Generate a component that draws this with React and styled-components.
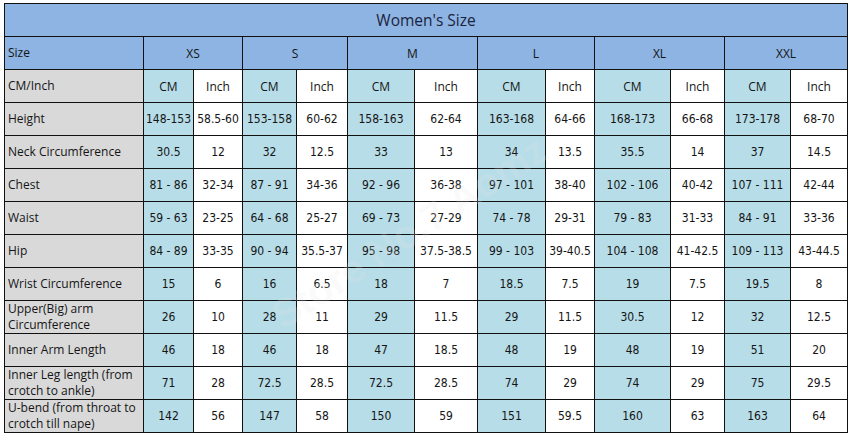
import React from "react";
import styled, { createGlobalStyle } from "styled-components";

const Global = createGlobalStyle`
  html, body { margin: 0; padding: 0; background: #fff; }
  body { width: 853px; height: 438px; overflow: hidden; }
`;

const Page = styled.div`
  position: relative;
  padding: 3px 0 0 4px;
  width: 853px;
  height: 438px;
  box-sizing: border-box;
`;

const Table = styled.table`
  border-collapse: collapse;
  table-layout: fixed;
  width: 844px;
  font-family: "Open Sans", "Noto Sans", sans-serif;
  color: #151515;
`;

const Row = styled.tr`
  height: 33px;
`;

const Cell = styled.td`
  border: 1px solid #111;
  padding: 0;
  text-align: center;
  vertical-align: middle;
  font-size: 12px;
  font-family: "Open Sans", "Noto Sans", sans-serif;
  background: ${(p) =>
    p.$tone === "blue" ? "#b7dde8" : p.$tone === "head" ? "#8db4e2" : "#fff"};
  white-space: nowrap;
  overflow: hidden;
`;

const NumCell = styled(Cell)`
  font-family: "DejaVu Sans", Verdana, sans-serif;
  font-stretch: condensed;
  font-size: 12px;
`;

const Label = styled(Cell)`
  text-align: left;
  padding-left: 3px;
  white-space: normal;
  line-height: 16px;
  background: ${(p) => (p.$tone === "head" ? "#8db4e2" : "#d9d9d9")};
`;

const Title = styled.td`
  border: 1px solid #111;
  background: #8db4e2;
  text-align: center;
  font-size: 15.5px;
  color: #1a2340;
  padding: 0;
  font-family: "Open Sans", "Noto Sans", sans-serif;
`;

const Watermark = styled.div`
  position: absolute;
  left: 250px;
  top: 210px;
  transform: rotate(-33deg);
  font-family: "Liberation Sans", sans-serif;
  font-weight: bold;
  font-size: 40px;
  color: rgba(230, 230, 230, 0.2);
  pointer-events: none;
  white-space: nowrap;
`;

const widths = [139, 50, 49, 54, 51, 67, 63, 68, 49, 76, 54, 66, 57];
const sizes = ["XS", "S", "M", "L", "XL", "XXL"];

const data = [
  ["Height", ["148-153", "58.5-60", "153-158", "60-62", "158-163", "62-64", "163-168", "64-66", "168-173", "66-68", "173-178", "68-70"]],
  ["Neck Circumference", ["30.5", "12", "32", "12.5", "33", "13", "34", "13.5", "35.5", "14", "37", "14.5"]],
  ["Chest", ["81 - 86", "32-34", "87 - 91", "34-36", "92 - 96", "36-38", "97 - 101", "38-40", "102 - 106", "40-42", "107 - 111", "42-44"]],
  ["Waist", ["59 - 63", "23-25", "64 - 68", "25-27", "69 - 73", "27-29", "74 - 78", "29-31", "79 - 83", "31-33", "84 - 91", "33-36"]],
  ["Hip", ["84 - 89", "33-35", "90 - 94", "35.5-37", "95 - 98", "37.5-38.5", "99 - 103", "39-40.5", "104 - 108", "41-42.5", "109 - 113", "43-44.5"]],
  ["Wrist Circumference", ["15", "6", "16", "6.5", "18", "7", "18.5", "7.5", "19", "7.5", "19.5", "8"]],
  ["Upper(Big) arm Circumference", ["26", "10", "28", "11", "29", "11.5", "29", "11.5", "30.5", "12", "32", "12.5"]],
  ["Inner Arm Length", ["46", "18", "46", "18", "47", "18.5", "48", "19", "48", "19", "51", "20"]],
  ["Inner Leg length (from crotch to ankle)", ["71", "28", "72.5", "28.5", "72.5", "28.5", "74", "29", "74", "29", "75", "29.5"]],
  ["U-bend (from throat to crotch till nape)", ["142", "56", "147", "58", "150", "59", "151", "59.5", "160", "63", "163", "64"]],
];

export default function App() {
  return (
    <Page>
      <Global />
      <Table>
        <colgroup>
          {widths.map((w, i) => (
            <col key={i} style={{ width: w }} />
          ))}
        </colgroup>
        <tbody>
          <Row>
            <Title colSpan={13}>Women's Size</Title>
          </Row>
          <Row>
            <Label $tone="head">Size</Label>
            {sizes.map((s) => (
              <Cell key={s} colSpan={2} $tone="head">
                {s}
              </Cell>
            ))}
          </Row>
          <Row>
            <Label>CM/Inch</Label>
            {sizes.map((s) => (
              <React.Fragment key={s}>
                <Cell $tone="blue">CM</Cell>
                <Cell>Inch</Cell>
              </React.Fragment>
            ))}
          </Row>
          {data.map(([label, vals]) => (
            <Row key={label}>
              <Label>{label}</Label>
              {vals.map((v, i) => (
                <NumCell key={i} $tone={i % 2 === 0 ? "blue" : "white"}>
                  {v}
                </NumCell>
              ))}
            </Row>
          ))}
        </tbody>
      </Table>
      <Watermark>Store No.7 Aomz</Watermark>
    </Page>
  );
}
